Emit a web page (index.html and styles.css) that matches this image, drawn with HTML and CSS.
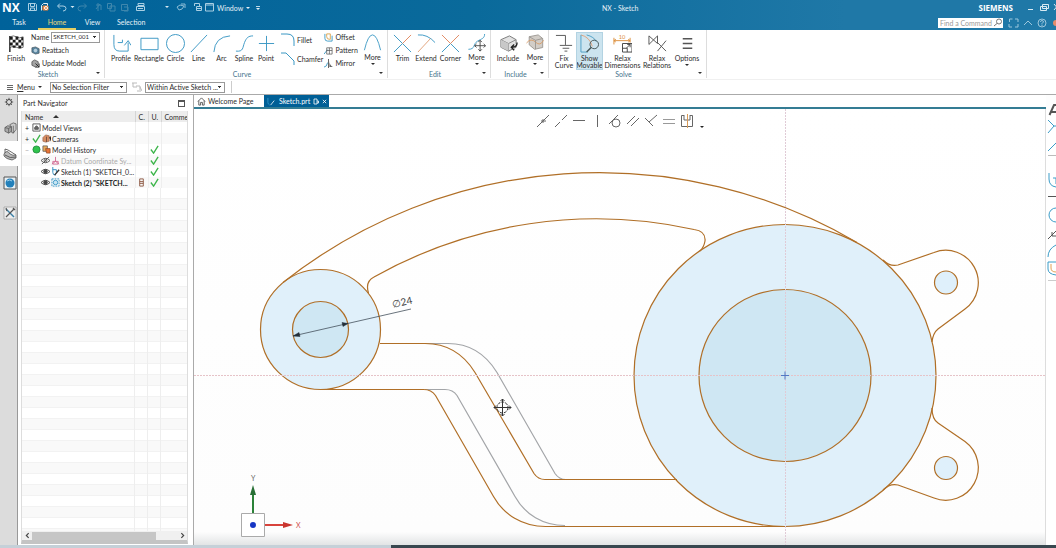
FILE: index.html
```html
<!DOCTYPE html>
<html lang="en">
<head>
<meta charset="utf-8">
<title>NX - Sketch</title>
<link rel="stylesheet" href="styles.css">
</head>
<body>
<header class="header">
  <div class="titlebar">
    <div class="quick">
      <span class="brand">NX</span>
      <svg class="quick-icons" viewBox="26 0 188 15" width="188" height="15" fill="none" stroke="#a9cfe3">
        <path d="M28.500 3.500h7l1 1v6h-8zM30.500 3.500v3h4v-3M30.500 10v-2h4v2"/>
        <path d="M41.500 10.500v-5l2-2h4v3" stroke="#e3eef4"/><path d="M43 6h5v4h-5z" fill="#e8823a" stroke="#e8823a"/><circle cx="46" cy="8" r="1.500" stroke="#fff"/>
        <path d="M60 3.500l-2.500 2.500 2.500 2.500M58 6h5q3 0 3 2.500t-3 2.500"/>
        <path d="M70.500 6h4l-2 2z" fill="#d5e8f2" stroke="none"/>
        <g stroke="#3f87ad"><path d="M84 3.500l2.500 2.500-2.500 2.500M86 6h-5q-3 0-3 2.500t3 2.500M98 3v8M96 9l4-5M96 5h5v5M107.500 3.500h4v5h-4zM110 6h5v5h-5zM121.500 4.500h6v6h-6zM124 7h4v4h-4"/></g>
        <path d="M138 3.500h6v2h-6zM136.500 6.500h8v4h-8zM138 8.500h5"/>
        <path d="M165 6h4l-2 2z" fill="#d5e8f2" stroke="none"/>
        <path d="M177 7l3-2 4 1-2 3-3 1zM181 4h4v4" stroke="#8bbdd7"/>
        <path d="M194.500 6V3.500h5V6M196.500 6.500h5v4h-5zM196.500 8.500h5"/>
        <path d="M205.500 3.500h8v7.500h-8zM205.500 5h8"/>
      </svg>
      <button class="title-btn">Window <i class="caret"></i></button>
      <button class="title-btn overflow" aria-label="Customize"><i class="caret"></i></button>
    </div>
    <div class="title">NX - Sketch</div>
    <div class="window-side">
      <span class="company">SIEMENS</span>
      <svg viewBox="0 0 30 15" width="30" height="15" fill="none" stroke="#d9eaf3"><path d="M2 9.500h5M16.500 4.500h6v4h-6zM14.500 6.500h6v4h-6zM28 4l5 6M33 4l-5 6"/></svg>
    </div>
  </div>
  <div class="tabbar">
    <nav class="tabs">
      <button class="tab">Task</button>
      <button class="tab active">Home</button>
      <button class="tab">View</button>
      <button class="tab">Selection</button>
    </nav>
    <div class="search">
      <input class="find" type="text" placeholder="Find a Command" aria-label="Find a Command">
      <svg class="lens" viewBox="0 0 10 9" width="10" height="9" fill="none" stroke="#777"><circle cx="6" cy="3.500" r="2.500"/><path d="M4 5.500L1 8"/></svg>
      <svg viewBox="0 0 53 14" width="53" height="14" fill="none" stroke="#9cc6dc"><path d="M6.500 6v-3h3M12 3h3v3M15 8v3h-3M9 11h-3v-3"/><path d="M21 9l4-4 4 4"/><circle cx="39" cy="7" r="4"/><path d="M37.500 6q0-1.500 1.500-1.500t1.500 1.500L39 7.500v1M39 9v1"/><circle cx="53" cy="7" r="3" fill="#e58b6a" stroke="none"/></svg>
    </div>
  </div>
</header>

<section class="ribbon" aria-label="Ribbon">
  <div class="group g-sketch">
    <div class="tools">
      <button class="tool w-30">
        <svg viewBox="0 0 20 20"><path d="M3 2v17" stroke="#222" stroke-width="1.500"/><path d="M3 3q4-2 7 0t7 0v11q-4 2-7 0t-7 0z" fill="#fff" stroke="#333" stroke-width=".7"/><path d="M3 3h3v3h-3zM9 2.500h3v3.500h-3zM15 3.500h2v3h-2zM6 6h3v3h-3zM12 6h3v3h-3zM3 9h3v3h-3zM9 9h3v3h-3zM15 9h2v3h-2zM6 12h3v2.500h-3zM12 12h3v3h-3z" fill="#1b1b1b"/></svg>
        <span>Finish</span>
      </button>
      <div class="stack">
        <div class="name-row"><label for="sk">Name</label><select id="sk" class="box name-box"><option>SKETCH_001</option></select></div>
        <button class="line-btn"><svg viewBox="0 0 10 10"><path d="M1 2l4-1 4 2v5l-4 1-4-2z" fill="#5b86a1" stroke="#3d4b55" stroke-width=".7"/><circle cx="5" cy="5" r="2.500" fill="#b7cedc" stroke="#3d6f8d" stroke-width=".7"/></svg>Reattach</button>
        <button class="line-btn"><svg viewBox="0 0 10 10"><path d="M1 3l3-2 4 2v4l-3 2-4-2z" fill="#a4a4a4" stroke="#333" stroke-width=".7"/><path d="M5 5l4 4M9 5v4h-4" stroke="#222" fill="none"/></svg>Update Model</button>
      </div>
    </div>
    <div class="group-name">Sketch<i class="caret"></i></div>
  </div>

  <div class="group g-curve">
    <div class="tools">
      <button class="tool w-26"><svg class="blue" viewBox="0 0 20 20"><path d="M2 1v10q0 7 6 7h9V9M13 12l4-5 3 5M6 9h5v-3"/></svg><span>Profile</span></button>
      <button class="tool w-30"><svg class="blue" viewBox="0 0 20 20"><path d="M1 4.500h18v12H1z"/></svg><span>Rectangle</span></button>
      <button class="tool w-23"><svg class="blue" viewBox="0 0 20 20"><circle cx="10" cy="10" r="9.500"/></svg><span>Circle</span></button>
      <button class="tool w-23"><svg class="blue" viewBox="0 0 20 20"><path d="M2 19L19 1"/></svg><span>Line</span></button>
      <button class="tool w-23"><svg class="blue" viewBox="0 0 20 20"><path d="M2 19Q3 3 19 2"/></svg><span>Arc</span></button>
      <button class="tool w-22"><svg class="blue" viewBox="0 0 20 20"><path d="M1 18c8 1 7-4 9-9s4-7 9-7"/></svg><span>Spline</span></button>
      <button class="tool w-22"><svg class="blue" viewBox="0 0 20 20"><path d="M10 2v16M2 10h16"/></svg><span>Point</span></button>
      <div class="stack two">
        <button class="line-btn big"><svg class="blue" viewBox="0 0 14 14"><path d="M0 1h6q7 0 7 7v5" /></svg>Fillet</button>
        <button class="line-btn big"><svg class="blue" viewBox="0 0 14 14"><path d="M0 1h5l8 8v4" /></svg>Chamfer</button>
      </div>
      <div class="stack three">
        <button class="line-btn"><svg viewBox="0 0 10 10" fill="none"><path d="M1 1v5q0 3 3 3h5V3" stroke="#3b98c4"/><path d="M3 1v3q0 3 3 3h1V1z" stroke="#d9a14a"/></svg>Offset</button>
        <button class="line-btn"><svg viewBox="0 0 10 10" fill="none" stroke="#555"><path d="M0 9l4-5" stroke="#3b98c4"/><path d="M3 2h6v7H3zM3 5h6M6 2v7" stroke-width=".8"/></svg>Pattern</button>
        <button class="line-btn"><svg viewBox="0 0 10 10" fill="none"><path d="M0 9q3 0 4-5" stroke="#3b98c4"/><path d="M5 0v10" stroke="#555"/><path d="M6 9V2q0 5 4 7z" fill="#666"/></svg>Mirror</button>
      </div>
      <button class="tool drop w-25"><svg class="blue" viewBox="0 0 20 20"><path d="M1 18Q5 1 10 1t9 17"/></svg><span>More</span><i class="caret"></i></button>
    </div>
    <div class="group-name">Curve<i class="caret"></i></div>
  </div>

  <div class="group g-edit">
    <div class="tools">
      <button class="tool w-23"><svg class="blue" viewBox="0 0 20 20"><path d="M1 1l18 18M1 19l9-9"/><path d="M10 10l9-9" stroke="#e2875f"/></svg><span>Trim</span></button>
      <button class="tool w-24"><svg class="blue" viewBox="0 0 20 20"><path d="M1 1q10-1 18 8"/><path d="M1 19L14 5" stroke="#e2a27a"/></svg><span>Extend</span></button>
      <button class="tool w-25"><svg class="blue" viewBox="0 0 20 20"><path d="M10 10l9 9M10 10l-9 9"/><path d="M1 1l9 9 9-9" stroke="#e2875f"/></svg><span>Corner</span></button>
      <button class="tool drop w-27"><svg class="blue" viewBox="0 0 20 20"><path d="M1 17c8 0 5-6 10-9s8-3 8-8"/><path d="M14 7v12M8 13h12M12 9l2-2 2 2M12 17l2 2 2-2M10 11l-2 2 2 2M18 11l2 2-2 2" stroke="#444"/></svg><span>More</span><i class="caret"></i></button>
    </div>
    <div class="group-name">Edit<i class="caret"></i></div>
  </div>

  <div class="group g-include">
    <div class="tools">
      <button class="tool w-28"><svg viewBox="0 0 20 20"><path d="M2 6l9-4 7 4v8l-8 4-8-4z" fill="#e2e2e2" stroke="#777"/><path d="M2 6l8 4 8-4M10 10v8" fill="none" stroke="#888"/><path d="M10 10v8l-8-4V6z" fill="#c8c8c8"/><path d="M19 9q0 5-5 5M16 11l-3 3 3 3" fill="#fff" stroke="#222" stroke-width="1.500"/></svg><span>Include</span></button>
      <button class="tool drop w-26"><svg viewBox="0 0 20 20"><path d="M3 3l10-2 5 4v10l-9 2-6-5z" fill="#d2cdc7" stroke="#9a9590"/><path d="M0 10q5-6 10-1t9-2" fill="none" stroke="#d89a63"/><path d="M3 3l7 4v10M10 7l8-2" stroke="#9a9590" fill="none"/></svg><span>More</span><i class="caret"></i></button>
    </div>
    <div class="group-name">Include<i class="caret"></i></div>
  </div>

  <div class="group g-solve">
    <div class="tools">
      <button class="tool w-24"><svg viewBox="0 0 20 20" fill="none" stroke="#555"><path d="M1 1.500h10v10M5 12h13M8 15h7M10 18h3"/></svg><span>Fix<br>Curve</span></button>
      <button class="tool pressed w-27"><svg viewBox="0 0 20 20" fill="none"><path d="M1 1q9 2 12 12" stroke="#e2a27a"/><path d="M7 1q8 2 10 7M1 1v18h7" stroke="#4e9fc4"/><circle cx="15" cy="11" r="4.500" stroke="#455"/><path d="M12 14l-5 5" stroke="#455" stroke-width="1.500"/></svg><span>Show<br>Movable</span></button>
      <button class="tool w-39"><svg viewBox="0 0 20 20" fill="none"><path d="M1 4v7M18 4v5M1 7h17M3 5.500L1 7l2 1.500M16 5.500L18 7l-2 1.500" stroke="#dc8f3d"/><path d="M10 10h10v9H10zM10 15h5v4M14 15l4-4M15 11h3v3" stroke="#444"/><text x="6" y="5" class="ten">10</text></svg><span>Relax<br>Dimensions</span></button>
      <button class="tool w-30"><svg viewBox="0 0 20 20" fill="none" stroke="#555"><path d="M1 2v9l9-9v8L1 2M10 18L19 7M10 9l9 9"/></svg><span>Relax<br>Relations</span></button>
      <button class="tool opt w-30"><svg viewBox="0 0 20 20" stroke="#555" stroke-width="1.500"><path d="M5 5h10M5 10h10M5 15h10"/></svg><span>Options</span><i class="caret"></i></button>
    </div>
    <div class="group-name">Solve<i class="caret"></i></div>
  </div>
</section>

<section class="filters" aria-label="Selection bar">
  <button class="menu-btn"><svg viewBox="0 0 7 7" width="7" height="7" stroke="#666"><path d="M0 1.500h6M0 3.500h6M0 5.500h6"/></svg><span><u>M</u>enu</span><i class="caret"></i></button>
  <select class="box filter" aria-label="Selection filter"><option>No Selection Filter</option></select>
  <svg viewBox="0 0 10 10" width="10" height="10" fill="none" stroke="#bbb"><path d="M0 1h5M1 1v4h4M4 4h4v4M5 9h4M8 5l2 4"/></svg>
  <select class="box scope" aria-label="Selection scope"><option>Within Active Sketch ...</option></select>
  <i class="bar"></i>
</section>

<main class="main">
  <aside class="rail">
    <button class="rail-btn gear" aria-label="Settings"><svg viewBox="0 0 12 12" width="10" height="10" fill="none" stroke="#444"><circle cx="6" cy="6" r="3" stroke-width="1.200"/><path d="M6 1v2M6 9v2M1 6h2M9 6h2M2.500 2.500l1.500 1.500M8 8l1.500 1.500M9.500 2.500L8 4M4 8L2.500 9.500"/></svg></button>
    <button class="rail-btn" aria-label="Assembly Navigator"><svg viewBox="0 0 14 14" width="13" height="13" stroke="#555" stroke-width=".8"><path d="M1 6l3-2 4 1v5l-3 2-4-2z" fill="#aaa"/><path d="M6 3l4-2 3 1v6l-3 4-2-1V5z" fill="#ccc"/><path d="M1 6l4 1v5M5 7l3-2M10 4v8" fill="none"/></svg></button>
    <button class="rail-btn current" aria-label="Part Navigator"><svg viewBox="0 0 14 14" width="14" height="14" stroke="#555" stroke-width=".8"><path d="M1 7q3-5 6 0 3 2 6 1v3l-4 2Q3 12 1 9z" fill="#bbb"/><path d="M2 2l3 1 8 5M2 2v4M2 8q5 4 11 2" fill="none" stroke="#444"/></svg></button>
    <button class="rail-btn" aria-label="Web Browser"><svg viewBox="0 0 14 14" width="14" height="14"><path d="M1 1h12v12H1z" fill="#e9f1f5" stroke="#555"/><circle cx="7" cy="7" r="4.500" fill="#2380ba"/><path d="M4 5q3-2 5 0" stroke="#9fd0ea" fill="none"/></svg></button>
    <button class="rail-btn" aria-label="Process Studio"><svg viewBox="0 0 14 14" width="14" height="14" fill="none"><path d="M1 1h12v12H1z" fill="#eee" stroke="#999" stroke-width=".7"/><path d="M3 3l8 8" stroke="#3a7fa5" stroke-width="1.500"/><path d="M11 3l-8 8M3 2l1 3M12 4l-2-2" stroke="#555" stroke-width="1.200"/></svg></button>
  </aside>

  <section class="panel">
    <div class="panel-head"><span>Part Navigator</span><button class="restore" aria-label="Float panel"></button></div>
    <div class="tree">
      <table>
        <thead><tr><th class="c-name">Name <i class="sort"></i></th><th class="c-c">C.</th><th class="c-u">U.</th><th>Comme</th></tr></thead>
        <tbody>
          <tr><td><div class="cell"><b class="exp">+</b><svg class="ic" viewBox="0 0 10 10" fill="none" stroke="#555"><path d="M1 1h8v8H1z"/><path d="M3 7V5l2-2 2 2v2z" fill="#666"/></svg>Model Views</div></td><td></td><td></td><td></td></tr>
          <tr><td><div class="cell"><b class="exp">+</b><svg class="ic tick" viewBox="0 0 10 10"><path d="M1 5l3 4 5-8"/></svg><svg class="ic" viewBox="0 0 10 10"><path d="M1 4l3-3 4 1v6l-4 1-3-1z" fill="#d88c61" stroke="#925c42" stroke-width=".7"/><path d="M5 3v6M8 4l2-1v5" stroke="#704d3d"/></svg>Cameras</div></td><td></td><td></td><td></td></tr>
          <tr><td><div class="cell"><b class="exp dim">−</b><svg class="ic" viewBox="0 0 10 10"><circle cx="5" cy="5" r="4" fill="#2fc34c" stroke="#198033" stroke-width=".8"/></svg><svg class="ic" viewBox="0 0 10 10"><path d="M1 1h5v6H1z" fill="#e8aa5c" stroke="#555" stroke-width=".8"/><path d="M4 4h5v5H5z" fill="#e87538" stroke="#8a4524" stroke-width=".8"/></svg>Model History</div></td><td></td><td><svg class="ic tick" viewBox="0 0 10 10"><path d="M1 5l3 4 5-8"/></svg></td><td></td></tr>
          <tr class="off"><td><div class="cell deep"><svg class="ic" viewBox="0 0 10 10" fill="none" stroke="#555"><path d="M0 5q5-5 10 0-5 5-10 0zM1 9l8-8"/><circle cx="5" cy="5" r="1.500"/></svg><svg class="ic" viewBox="0 0 10 10" fill="none" stroke="#d36a92"><path d="M5 1v5L1 9M5 6l4 3M2 6h6v3H2z"/></svg>Datum Coordinate Sy...</div></td><td></td><td><svg class="ic tick" viewBox="0 0 10 10"><path d="M1 5l3 4 5-8"/></svg></td><td></td></tr>
          <tr><td><div class="cell deep"><svg class="ic" viewBox="0 0 10 10" fill="none" stroke="#444"><path d="M0 5q5-5 10 0-5 5-10 0z"/><circle cx="5" cy="5" r="2" fill="#444"/></svg><svg class="ic" viewBox="0 0 10 10" fill="none"><path d="M2 0v6q0 3 3 3M2 3h4v3" stroke="#2587bb"/><path d="M4 9l5-6" stroke="#333" stroke-width="1.500"/></svg>Sketch (1) "SKETCH_0...</div></td><td></td><td><svg class="ic tick" viewBox="0 0 10 10"><path d="M1 5l3 4 5-8"/></svg></td><td></td></tr>
          <tr><td><div class="cell deep strong"><svg class="ic" viewBox="0 0 10 10" fill="none" stroke="#444"><path d="M0 5q5-5 10 0-5 5-10 0z"/><circle cx="5" cy="5" r="2" fill="#444"/></svg><svg class="ic" viewBox="0 0 10 10" fill="none" stroke="#3595c5"><path d="M1 1h8v8H1z" stroke-dasharray="2 1"/><circle cx="5" cy="5" r="2.500" fill="#c9e6f3"/></svg>Sketch (2) "SKETCH...</div></td><td><svg class="ic" viewBox="0 0 10 10" fill="none" stroke="#8b5640"><path d="M3 1h4v8H3zM3 4h4M3 6h4"/></svg></td><td><svg class="ic tick" viewBox="0 0 10 10"><path d="M1 5l3 4 5-8"/></svg></td><td></td></tr>
        </tbody>
      </table>
      <div class="rows"><i></i><i></i><i></i></div>
      <div class="hscroll"><button aria-label="Scroll left"><svg viewBox="0 0 6 6"><path d="M4 1L2 3l2 2"/></svg></button><span class="thumb"></span><button aria-label="Scroll right"><svg viewBox="0 0 6 6"><path d="M2 1l2 2-2 2"/></svg></button></div>
    </div>
  </section>

  <section class="work">
    <nav class="docs">
      <button class="doc"><svg viewBox="0 0 10 10" width="9" height="9" fill="none" stroke="#555"><path d="M1 5l4-4 4 4M2 4v5h2V6h2v3h2V4"/></svg>Welcome Page</button>
      <button class="doc open"><svg viewBox="0 0 10 10" width="9" height="9" fill="none"><path d="M1 1v5q0 2 2 3" stroke="#2d95c8"/><path d="M4 9l4-5" stroke="#dce9f0"/></svg>Sketch.prt<svg viewBox="0 0 6 7" width="6" height="7" fill="none" stroke="#fff" stroke-width=".8"><path d="M1 1h3v5H1zM4 3h1.500v2H4"/></svg><svg viewBox="0 0 6 6" width="5" height="5" stroke="#fff"><path d="M1 1l4 4M5 1L1 5"/></svg></button>
    </nav>
    <div class="view">
      <div class="canvas">
        <svg class="drawing" viewBox="194 109 851 436" preserveAspectRatio="xMinYMin meet" fill="none">
          <g class="edge">
            <circle cx="785" cy="375.500" r="151" fill="#e0f0fa"/>
            <circle cx="785" cy="375.500" r="86" fill="#cfe7f3"/>
            <circle cx="320.500" cy="329.500" r="60" fill="#e0f0fa"/>
            <circle cx="320.500" cy="329.500" r="28" fill="#cfe7f3"/>
            <circle cx="946" cy="282.500" r="11.500" fill="#dff0fb"/>
            <circle cx="946" cy="468" r="11.500" fill="#dff0fb"/>
          </g>
          <path class="ghost" d="M425 343.500h23c22 0 38 11 49 29l58 101q4 6 11 6M425 389.500h20q8 0 12 6l58 101c10 18 28 29 50 29"/>
          <g class="edge">
            <path d="M283 282.500A510 510 0 0 1 857 242.500"/>
            <path d="M368.500 293C366 285 368 280 374 277A453.500 453.500 0 0 1 694 229.500Q706 231 705 241Q704 247 700 251"/>
            <path d="M380 343.500h45c22 0 39 11 50 29l59 101q4 6 11 6h132"/>
            <path d="M320.500 389.500h103q8 0 12 6l58 101c10 18 29 30 52 30h240"/>
            <path d="M883 260Q890 267 898 265L934 252.500A32.500 32.500 0 0 1 965 309L938 329Q933 333 932 342"/>
            <path d="M932 408Q932 419 938 423L965 441.500A32.500 32.500 0 0 1 934 498L898 485Q890 483 883 490"/>
          </g>
          <path d="M194 375.500h852" stroke="#e6c3c8" stroke-dasharray="2 1"/>
          <path d="M785.500 109v436" stroke="#e0cbd6" stroke-dasharray="2 1"/>
          <path d="M781 375.500h8M785 371.500v8" stroke="#5279c4"/>
          <path d="M293 336L411 309" stroke="#44515c" stroke-width=".8"/>
          <path d="M293 336l6-3.500 1 4zM348 323.500l-6-1 1 4z" fill="#222e38" stroke="#222e38" stroke-width=".5"/>
          <text class="dim-text" transform="rotate(-13 393 308)" x="393" y="308">∅24</text>
          <g stroke="#333"><circle cx="502.500" cy="407.500" r="5.500" stroke-dasharray="3 1"/><path d="M502.500 399v17M494 407.500h17M500.500 401l2-2 2 2M500.500 414l2 2 2-2M496 405.500l-2 2 2 2M509 405.500l2 2-2 2"/></g>
          <path d="M253 513v-20" stroke="#2b8238" stroke-width="2"/><path d="M253 485l3 10h-6z" fill="#286f35"/>
          <path d="M265 525h20" stroke="#d8433c" stroke-width="2"/><path d="M293 525l-10-3v6z" fill="#c93630"/>
          <path d="M241.500 513.500h23v23h-23z" stroke="#aaa" fill="#fff"/><circle cx="253" cy="525" r="3" fill="#1636c4"/>
          <text class="axis" x="251" y="481" fill="#666">Y</text><text class="axis" x="296" y="528" fill="#d05050">X</text>
        </svg>
        <div class="constraints" role="toolbar" aria-label="Constraints">
          <button aria-label="Coincident"><svg viewBox="0 0 14 14"><path d="M1 13L13 1M5 7h5M7 5v4"/></svg></button>
          <button aria-label="Collinear"><svg viewBox="0 0 14 14"><path d="M1 13l5-5M8 6l5-5"/></svg></button>
          <button aria-label="Horizontal"><svg viewBox="0 0 14 14"><path d="M1 6.500h12"/></svg></button>
          <button aria-label="Vertical"><svg viewBox="0 0 14 14"><path d="M7.500 1v12"/></svg></button>
          <button aria-label="Tangent"><svg viewBox="0 0 14 14"><path d="M1 10L10 1"/><circle cx="8" cy="9" r="4"/></svg></button>
          <button aria-label="Parallel"><svg viewBox="0 0 14 14"><path d="M1 10l8-8M5 12l8-8"/></svg></button>
          <button aria-label="Perpendicular"><svg viewBox="0 0 14 14"><path d="M1 4l8 8M5 8l8-7"/></svg></button>
          <button aria-label="Equal"><svg viewBox="0 0 14 14" class="faint"><path d="M1 5.500h12M1 9.500h12"/></svg></button>
          <button aria-label="Symmetric"><svg viewBox="0 0 14 14"><path d="M4 1.500H1.500v11h11v-11H10M4 1v5h6V1"/><path d="M7.500 0v14" stroke="#d99a55"/></svg></button>
          <i class="caret"></i>
        </div>
      </div>
      <aside class="palette" aria-label="Sketch tools">
        <svg viewBox="0 0 10 190" width="10" height="190" fill="none" stroke="#3b9cc8">
          <path d="M3.500 6L8-4h3M5 3h6" stroke="#555" stroke-width="2"/><path d="M2 11l6 6-6 7M8 17h3M2 42l8-8"/><path d="M2 46.500h8" stroke="#bbb"/><path d="M3 64v6q0 7 7 8M7 69h3v6"/><path d="M2 87.500h8" stroke="#555"/><circle cx="10" cy="106" r="7"/><path d="M2 130l8-8M6 123v4h4" stroke="#555"/><path d="M2 148q0-8 8-12M2 153v7q0 5 8 6M2 153h8"/><path d="M5 155v4q0 4 5 4" stroke="#e3a052"/><path d="M2 171.500h8" stroke="#ccc"/>
        </svg>
      </aside>
    </div>
  </section>
</main>
<footer class="progress"><span></span></footer>
</body>
</html>
```
FILE: styles.css
```css
* { box-sizing: border-box; }
html, body { height: 100%; }
body {
  margin: 0;
  display: flex;
  flex-direction: column;
  overflow: hidden;
  background: #fdfdfd;
  color: #2c2c2c;
  font: 7px/8px Lato, "Open Sans", sans-serif;
}
button, input, select {
  font: inherit;
  color: inherit;
  margin: 0;
  padding: 0;
  border: 0;
  background: none;
  border-radius: 0;
}
button { white-space: nowrap; }
i { font-style: normal; }
svg { display: block; flex: none; }
.caret {
  flex: none;
  border: 2px solid transparent;
  border-top-color: currentColor;
  border-bottom: 0;
}

/* Title and tabs */
.header {
  flex: none;
  color: #e6f1f7;
  background: linear-gradient(90deg, #00629a, #0a6a9b 45%, #1f78a7 80%, #1f78a7);
}
.titlebar {
  display: grid;
  grid-template-columns: 57% auto 1fr;
  align-items: center;
  height: 15px;
}
.quick { display: flex; align-items: center; }
.brand { width: 26px; padding-left: 2px; font: bold 12px/15px "Open Sans", sans-serif; color: #fff; }
.title-btn { display: flex; align-items: center; gap: 3px; padding-left: 3px; }
.overflow { border-top: 1px solid #b9d7e6; margin-left: 6px; padding: 1px 0 0; }
.window-side { display: flex; align-items: center; justify-content: flex-end; gap: 13px; }
.company { font: bold 8px/8px "Open Sans", sans-serif; color: #fff; }
.tabbar { display: flex; justify-content: space-between; height: 15px; }
.tabs { display: flex; }
.tab { min-width: 33px; padding: 0 8px; border-bottom: 2px solid transparent; line-height: 12px; }
.tab:first-child, .tab.active { min-width: 38px; }
.tab.active { color: #f0d878; border-color: #e6cf62; }
.search { display: flex; align-items: center; }
.find { width: 65px; height: 10px; padding: 0 10px 0 2px; background: #fff; color: #555; }
.find::placeholder { color: #999; opacity: 1; }
.lens { margin: 0 0 0 -10px; }

/* Ribbon */
.ribbon { flex: none; display: flex; height: 50px; border-bottom: 1px solid #f0f0f0; background: #fff; }
.group {
  display: flex;
  flex-direction: column;
  justify-content: space-between;
  border-right: 1px solid #ddd;
  margin-bottom: 1px;
}
.tools { display: flex; align-items: flex-start; padding: 2px 2px 0 3px; }
.tool {
  display: flex;
  flex-direction: column;
  align-items: center;
  gap: 2px;
  padding-top: 2px;
  line-height: 7px;
  flex: none;
}
.tool svg { width: 19px; height: 19px; }
.tool.drop svg { height: 18px; }
.tool span { text-align: center; }
.pressed { background: #cce4ef; outline: 1px solid #b3d3e2; outline-offset: -1px; height: 38px; }
.blue { fill: none; stroke: #3b98c4; }
.ten { font: 6px Lato, sans-serif; fill: #dc8f3d; }
.w-22 { width: 22px; } .w-23 { width: 23px; } .w-24 { width: 24px; } .w-25 { width: 25px; }
.w-26 { width: 26px; } .w-27 { width: 27px; } .w-28 { width: 28px; } .w-30 { width: 30px; } .w-39 { width: 39px; }
.g-sketch { width: 105px; }
.g-sketch .tools { padding-left: 1px; }
.g-curve { width: 283px; }
.g-edit { width: 103px; }
.g-include { width: 58px; }
.g-solve { width: 158px; }
.group-name { position: relative; padding-right: 8px; text-align: center; color: #45738c; line-height: 8px; }
.group-name .caret { position: absolute; right: 4px; top: 2px; color: #333; }
.stack { display: flex; flex-direction: column; gap: 5px; }
.line-btn { display: flex; align-items: center; gap: 2px; height: 8px; }
.line-btn svg { width: 9px; height: 9px; }
.name-row { display: flex; align-items: center; gap: 2px; height: 10px; margin-bottom: -1px; }
.box {
  appearance: none;
  border: 1px solid #999;
  background-color: #fff;
  background-repeat: no-repeat;
  background-image: linear-gradient(135deg, #333 50%, transparent 50%), linear-gradient(225deg, #333 50%, transparent 50%);
  background-size: 2px 2px;
  background-position: right 2px center, right 4px center;
  padding: 0 6px 0 1px;
}
.name-box { width: 49px; height: 11px; font-size: 6px; }
.two { padding: 1px 0 0 4px; width: 48px; }
.big { height: 14px; }
.big svg { width: 14px; height: 14px; }
.three { padding: 1px 0 0 1px; width: 38px; }

/* Selection bar */
.filters {
  flex: none;
  display: flex;
  align-items: center;
  height: 15px;
  padding-left: 7px;
  border-bottom: 1px solid #aaa;
  background: #fff;
}
.menu-btn { display: flex; align-items: center; gap: 3px; width: 43px; }
.filter { width: 77px; height: 11px; margin-right: 5px; }
.scope { width: 80px; height: 11px; margin: 0 6px 0 3px; }
.bar { width: 1px; height: 12px; background: #ccc; }

/* Work area */
.main { flex: 1; min-height: 0; display: flex; }
.rail { flex: none; width: 18px; display: flex; flex-direction: column; gap: 4px; background: #dcdcdc; border-right: 1px solid #999; }
.rail-btn { width: 18px; height: 25px; display: flex; align-items: center; justify-content: center; padding-left: 2px; }
.rail-btn:nth-child(n+4) { margin-bottom: 1px; }
.gear { height: 14px; margin-bottom: 3px; padding: 0; }
.gear + .rail-btn { margin-bottom: -4px; }
.current { background: #fff; }
.panel { flex: none; width: 176px; display: flex; flex-direction: column; padding: 0 5px 1px 3px; border-right: 1px solid #aaa; background: #fff; }
.panel-head { display: flex; align-items: center; justify-content: space-between; height: 16px; padding: 0 3px 0 2px; }
.restore { width: 7px; height: 7px; border: 1px solid #555; border-top-width: 2px; }
.tree { flex: 1; min-height: 0; display: flex; flex-direction: column; border: 1px solid #ddd; border-top: 0; border-bottom: 4px solid #c4c4c4; }
table { width: 100%; border-collapse: collapse; table-layout: fixed; }
th, td { height: 11px; padding: 0; text-align: left; font-weight: normal; border-right: 1px solid #eee; overflow: hidden; white-space: nowrap; line-height: 10px; }
th { background: #ededed; border-color: #d5d5d5; padding-left: 3px; }
th:last-child, td:last-child { border-right: 0; }
tbody tr:nth-child(even) { background: #f9f9f9; }
.c-name { width: 113px; } .c-c { width: 13px; } .c-u { width: 13px; }
.sort { display: inline-block; margin: 0 0 2px 8px; border: 3px solid transparent; border-top: 0; border-bottom-color: #333; }
.cell { display: flex; align-items: center; height: 10px; padding-left: 3px; gap: 1px; }
.deep { padding-left: 19px; }
.exp { width: 6px; font-weight: normal; }
.dim { color: #aaa; }
.ic { width: 9px; height: 9px; }
td > .ic { margin: 0 auto; }
.tick { fill: none; stroke: #3cb54a; stroke-width: 1.5; }
.off { color: #aaa; }
.strong { font-weight: bold; color: #222; }
.rows {
  flex: 1;
  display: grid;
  grid-template-columns: 113px 13px 13px 1fr;
  background: repeating-linear-gradient(#fff 0 10px, #f2f2f2 10px 11px, #f9f9f9 11px 21px, #f2f2f2 21px 22px);
}
.rows i { border-right: 1px solid #eee; }
.hscroll { flex: none; display: flex; align-items: center; height: 9px; background: #f0f0f0; }
.hscroll button { width: 10px; }
.hscroll svg { width: 7px; height: 7px; margin: auto; fill: none; stroke: #444; }
.thumb { flex: 0 1 124px; height: 8px; background: #c6c6c6; margin-right: auto; }

.work { flex: 1; min-width: 0; display: flex; flex-direction: column; }
.docs { flex: none; display: flex; height: 14px; border-bottom: 2px solid #347c94; margin-right: 10px; background: #fff; }
.doc { display: flex; align-items: center; gap: 2px; width: 70px; padding-left: 3px; }
.open { width: 65px; gap: 3px; background: #005f96; color: #fff; }
.view { flex: 1; min-height: 0; display: flex; }
.canvas { flex: 1; min-width: 0; position: relative; background: linear-gradient(#fff, #fdfdfd 97%, #e2e4e5); border-right: 1px solid #ddd; overflow: hidden; }
.drawing { width: 100%; height: 100%; }
.edge { stroke: #b06f27; stroke-width: 1.2; }
.ghost { stroke: #a3a5a8; stroke-width: 1.2; }
.dim-text { font: 10px Lato, "DejaVu Sans", sans-serif; fill: #444; }
.axis { font: 7px Lato, sans-serif; }
.constraints { position: absolute; left: 40%; top: 5px; display: flex; align-items: flex-end; gap: 4px; padding-left: 2px; }
.constraints svg { width: 14px; height: 14px; fill: none; stroke: #666; }
.constraints .faint { stroke: #999; }
.constraints .caret { margin: 0 0 0 2px; color: #222; }
.palette { flex: none; width: 10px; background: #fff; }
.palette svg { overflow: visible; }
.progress { flex: none; height: 3px; background: #38474f; }
.progress span { display: block; width: 37%; height: 3px; background: #c5d0d8; }
```
